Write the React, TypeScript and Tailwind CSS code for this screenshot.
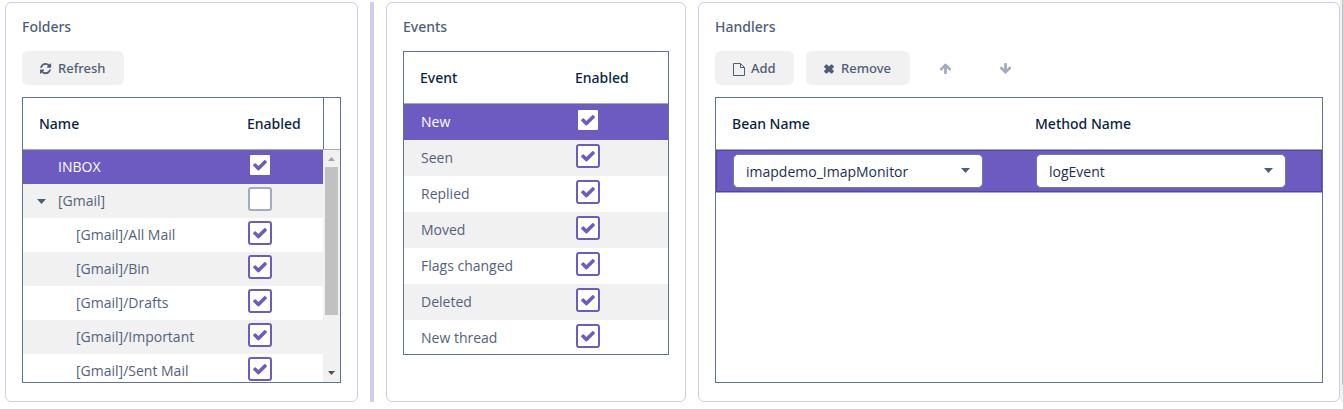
import React from "react";

const PATHS = {
  refresh:
    "M1511 928q0 5-1 7-64 268-268 434.5t-478 166.5q-146 0-282.5-55t-243.5-157l-129 129q-19 19-45 19t-45-19-19-45v-448q0-26 19-45t45-19h448q26 0 45 19t19 45-19 45l-137 137q71 66 161 102t187 36q134 0 250-65t186-179q11-17 53-117 8-23 30-23h192q13 0 22.5 9.5t9.5 22.5zm25-800v448q0 26-19 45t-45 19h-448q-26 0-45-19t-19-45 19-45l138-138q-148-137-349-137-134 0-250 65t-186 179q-11 17-53 117-8 23-30 23h-199q-13 0-22.5-9.5t-9.5-22.5v-7q65-268 270-434.5t480-166.5q146 0 284 55.5t245 156.5l130-129q19-19 45-19t45 19 19 45z",
  arrowUp:
    "M1675 971q0 51-37 90l-75 75q-38 38-91 38-54 0-90-38l-294-293v704q0 52-37.5 84.5t-90.5 32.5h-128q-53 0-90.5-32.5t-37.5-84.5v-704l-294 293q-36 38-90 38t-90-38l-75-75q-38-38-38-90 0-53 38-91l651-651q35-37 90-37 54 0 91 37l651 651q37 39 37 91z",
  arrowDown:
    "M1675 832q0 53-37 90l-651 652q-39 37-91 37-53 0-90-37l-651-652q-38-36-38-90 0-53 38-91l74-75q39-37 91-37 53 0 90 37l294 294v-704q0-52 38-90t90-38h128q52 0 90 38t38 90v704l294-294q37-37 90-37 52 0 91 37l75 75q37 39 37 91z",
  check:
    "M1671 566q0 40-28 68l-724 724-136 136q-28 28-68 28t-68-28l-136-136-362-362q-28-28-28-68t28-68l136-136q28-28 68-28t68 28l294 295 656-657q28-28 68-28t68 28l136 136q28 28 28 68z",
};

function Glyph({ d, className }: { d: string; className: string }) {
  return (
    <svg viewBox="0 0 1792 1792" fill="currentColor" className={className}>
      <path d={d} />
    </svg>
  );
}

function Check({ checked = true }: { checked?: boolean }) {
  return (
    <span
      className={`flex size-6 shrink-0 justify-center rounded-[3px] border-2 bg-white text-[#6e5bc1] ${
        checked ? "border-[#6e5bc1]" : "border-[#a1abc1]"
      }`}
    >
      {checked && <Glyph d={PATHS.check} className="mt-[1.500px] size-4 shrink-0" />}
    </span>
  );
}

function Panel({ title, className, children }: { title: string; className: string; children: React.ReactNode }) {
  return (
    <section className={`h-[400px] shrink-0 rounded-md border border-[#d0cbea] bg-white px-4 pt-[13px] ${className}`}>
      <h2 className="h-[35px] text-[14px] leading-[21px] font-medium text-[#4e5d78]">{title}</h2>
      {children}
    </section>
  );
}

function Button({ className, children }: { className: string; children: React.ReactNode }) {
  return (
    <button
      className={`flex h-[34px] items-center rounded-md bg-[#f1f1f1] pt-[2px] text-[13px] font-medium text-[#4e5d78] ${className}`}
    >
      {children}
    </button>
  );
}

function Caret() {
  return (
    <svg viewBox="0 0 9 5" className="h-[5px] w-[9px] shrink-0 fill-[#4e5d78]">
      <path d="M0 0h9L4.500 5z" />
    </svg>
  );
}

const folders = [
  { name: "INBOX", level: 0, checked: true },
  { name: "[Gmail]", level: 0, checked: false, open: true },
  { name: "[Gmail]/All Mail", level: 1, checked: true },
  { name: "[Gmail]/Bin", level: 1, checked: true },
  { name: "[Gmail]/Drafts", level: 1, checked: true },
  { name: "[Gmail]/Important", level: 1, checked: true },
  { name: "[Gmail]/Sent Mail", level: 1, checked: true },
];

const events = ["New", "Seen", "Replied", "Moved", "Flags changed", "Deleted", "New thread"];

const rowColor = (i: number) =>
  i === 0 ? "bg-[#6e5bc1] text-white" : i % 2 ? "bg-[#f1f1f1] text-[#53627c]" : "bg-white text-[#53627c]";

function Select({ value, className }: { value: string; className: string }) {
  return (
    <div
      className={`flex h-[34px] items-center justify-between rounded-[5px] border border-[#6c7ba0] bg-white pr-3 pl-3 font-['Open_Sans',sans-serif] text-[14px] text-[#1c2f52] ${className}`}
    >
      <span className="pt-px">{value}</span>
      <span className="pb-px">
        <Caret />
      </span>
    </div>
  );
}

export default function App() {
  return (
    <main className="flex h-[409px] w-[1343px] overflow-hidden bg-white pt-[2px] pl-[5px] font-['Noto_Sans',sans-serif]">
      <Panel title="Folders" className="w-[353px]">
        <Button className="w-[102px] pl-[18px]">
          <Glyph d={PATHS.refresh} className="mr-[5px] size-[13px]" />
          Refresh
        </Button>
        <div className="mt-3 h-[286px] w-[319px] overflow-hidden border border-[#62718f] text-[14px]">
          <div className="flex h-[52px] items-center border-b border-[#a0abc3] font-medium text-[#0a1f44]">
            <span className="w-[208px] pl-4">Name</span>
            <span className="flex-1 pl-4">Enabled</span>
            <span className="h-full w-[17px] border-l border-[#62718f]" />
          </div>
          <div className="flex h-[232px]">
            <div className="w-[300px] overflow-hidden font-['Open_Sans',sans-serif]">
              {folders.map((f, i) => (
                <div key={f.name} className={`flex h-[34px] items-start ${rowColor(i)}`}>
                  <span className="flex w-[225px] items-center leading-[34px]">
                    <span className={f.level ? "w-[53px]" : "flex w-[35px] pl-[14px]"}>{f.open && <Caret />}</span>
                    {f.name}
                  </span>
                  <span className="pt-[3px]">
                    <Check checked={f.checked} />
                  </span>
                </div>
              ))}
            </div>
            <div className="flex w-[17px] flex-col items-center bg-[#f1f1f1]">
              <svg viewBox="0 0 17 17" className="size-[17px] shrink-0 fill-[#a3a3a3]">
                <path d="M5 11h7L8.500 7z" />
              </svg>
              <div className="h-[148px] w-[13px] bg-[#c1c1c1]" />
              <svg viewBox="0 0 17 17" className="mt-auto size-[17px] shrink-0 fill-[#505050]">
                <path d="M5 6h7L8.500 10z" />
              </svg>
            </div>
          </div>
        </div>
      </Panel>

      <div className="mx-3 h-[400px] w-1 shrink-0 rounded-[1px] bg-[#d0cbea]" />

      <Panel title="Events" className="w-[300px]">
        <div className="h-[304px] w-[266px] overflow-hidden border border-[#62718f] text-[14px]">
          <div className="flex h-[52px] items-center border-b border-[#a0abc3] font-medium text-[#0a1f44]">
            <span className="w-[155px] pl-4">Event</span>
            <span className="pl-4">Enabled</span>
          </div>
          {events.map((name, i) => (
            <div key={name} className={`flex h-9 items-start font-['Open_Sans',sans-serif] ${rowColor(i)}`}>
              <span className="w-[172px] pl-[17px] leading-9">{name}</span>
              <span className="pt-1">
                <Check />
              </span>
            </div>
          ))}
        </div>
      </Panel>

      <Panel title="Handlers" className="ml-3 w-[642px]">
        <div className="flex items-center">
          <Button className="w-[79px] pl-[18px]">
            <svg viewBox="0 0 12 13" className="mr-[6px] h-[13px] w-3 fill-none stroke-current">
              <path d="M.5.5h7l4 4v8H.5zM7.500.5v4h4" />
            </svg>
            Add
          </Button>
          <Button className="ml-3 w-[104px] pl-[18px]">
            <svg viewBox="0 0 10 10" className="mr-[7px] size-[10px] fill-current">
              <path d="M.2 2.200 2 .4h1L5 2.500 7 .4h1l1.800 1.800v1L7.900 5l1.900 1.800v1L8 9.600H7L5 7.500 3 9.600H2L.2 7.800v-1L2.100 5 .2 3.200z" />
            </svg>
            Remove
          </Button>
          <span className="ml-[29px] text-[#a1abc1]">
            <Glyph d={PATHS.arrowUp} className="size-[13px]" />
          </span>
          <span className="ml-[47px] text-[#a1abc1]">
            <Glyph d={PATHS.arrowDown} className="size-[13px]" />
          </span>
        </div>
        <div className="mt-3 h-[286px] w-[608px] border border-[#62718f] text-[14px]">
          <div className="flex h-[52px] items-center border-b border-[#a0abc3] font-medium text-[#0a1f44]">
            <span className="w-[303px] pl-4">Bean Name</span>
            <span className="pl-4">Method Name</span>
          </div>
          <div className="border-b border-[#a0abc3]">
            <div className="flex h-[42px] border border-[#5443a8] bg-[#6e5bc1] pt-[3px] pl-4">
              <Select value="imapdemo_ImapMonitor" className="w-[250px]" />
              <Select value="logEvent" className="ml-[53px] w-[250px]" />
            </div>
          </div>
        </div>
      </Panel>

      <div className="-mt-[2px] h-[402px] w-[3px] shrink-0 bg-[#f1f1f1] pl-[2px]">
        <div className="h-[385px] w-px bg-[#c1c1c1]" />
      </div>
    </main>
  );
}
